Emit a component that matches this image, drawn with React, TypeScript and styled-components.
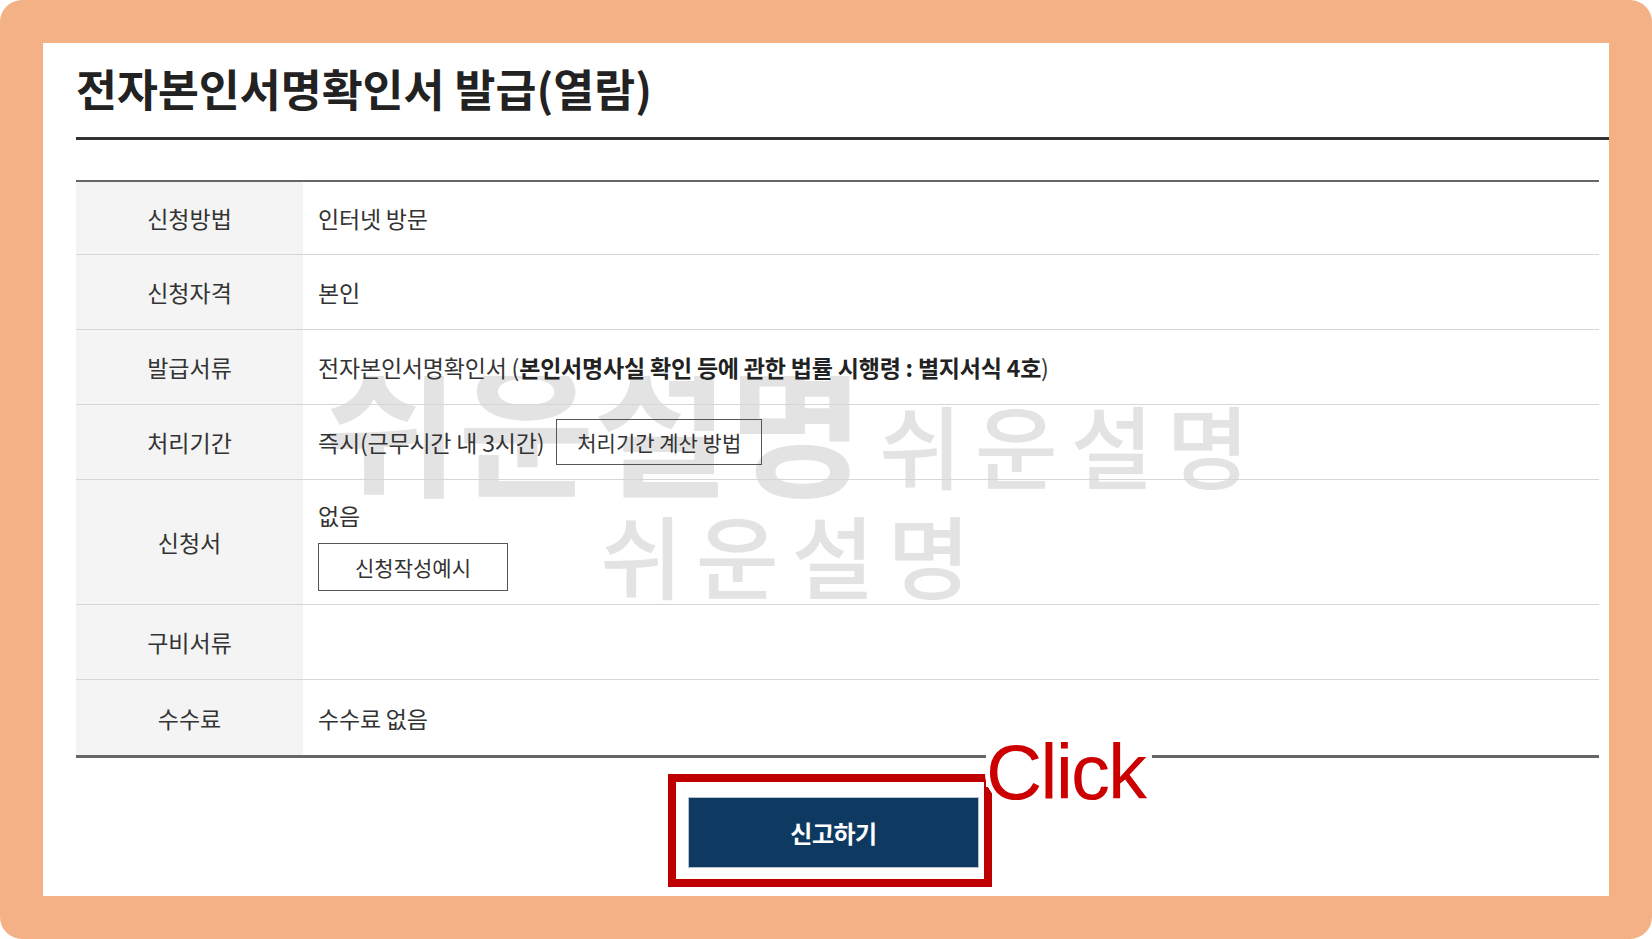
import styled, { createGlobalStyle } from 'styled-components';

const GlobalStyle = createGlobalStyle`
  html, body {
    margin: 0;
    padding: 0;
    background: #fff;
  }

  body {
    font-family: 'Noto Sans CJK KR', 'Noto Sans', sans-serif;
    color: #333;
  }

  * {
    box-sizing: border-box;
  }
`;

const Frame = styled.div`
  width: 1652px;
  height: 939px;
  padding: 43px;
  background: #f3b185;
  border-radius: 22px;
`;

const Panel = styled.div`
  height: 100%;
  padding-left: 33px;
  display: flex;
  flex-direction: column;
  background: #fff;
`;

const Title = styled.h1`
  margin: 19px 0 0;
  padding-bottom: 23px;
  border-bottom: 3px solid #333;
  font-size: 44.5px;
  line-height: 52px;
  font-weight: 700;
  letter-spacing: 0;
  color: #222;
`;

const TableWrap = styled.div`
  position: relative;
  margin: 40px 10px 0 0;
`;

const Table = styled.div`
  position: relative;
  z-index: 1;
  border-top: 2px solid #666;
  border-bottom: 3px solid #666;
`;

const Row = styled.div`
  display: grid;
  grid-template-columns: 227px 1fr;
  min-height: 75px;

  & + & {
    border-top: 1px solid #d6d6d6;
  }

  &:first-child {
    min-height: 72px;
  }

  &:last-child {
    min-height: 76px;
  }
`;

const Label = styled.div`
  display: flex;
  align-items: center;
  justify-content: center;
  background: #f4f4f4;
  font-size: 23px;
  color: #333;
`;

const Value = styled.div<{ $stack?: boolean }>`
  display: flex;
  flex-direction: ${(p) => (p.$stack ? 'column' : 'row')};
  align-items: ${(p) => (p.$stack ? 'flex-start' : 'center')};
  gap: ${(p) => (p.$stack ? '13px' : '12px')};
  padding: ${(p) => (p.$stack ? '20px 15px 13px' : '0 15px')};
  font-size: 23px;
  line-height: 30px;
  letter-spacing: -0.2px;
  color: #333;

  b {
    font-weight: 700;
    color: #222;
  }
`;

const OutlineButton = styled.button<{ $w: number; $h: number }>`
  width: ${(p) => p.$w}px;
  height: ${(p) => p.$h}px;
  padding: 0;
  border: 1px solid #555;
  background: transparent;
  font-family: inherit;
  font-size: 21px;
  color: #333;
`;

const Watermark = styled.div<{ $size: number; $top: number; $left: number; $spacing: number; $weight: number }>`
  position: absolute;
  top: ${(p) => p.$top}px;
  left: ${(p) => p.$left}px;
  z-index: 0;
  font-size: ${(p) => p.$size}px;
  line-height: 1;
  font-weight: ${(p) => p.$weight};
  letter-spacing: ${(p) => p.$spacing}px;
  white-space: nowrap;
  color: #e3e3e3;
  pointer-events: none;
`;

const WatermarkClip = styled.div`
  position: absolute;
  top: 196px;
  left: 247px;
  height: 150px;
  width: 600px;
  overflow: hidden;
  z-index: 0;
  pointer-events: none;

  ${Watermark} {
    position: static;
    margin-top: -29px;
  }
`;

const ButtonRow = styled.div`
  display: flex;
  justify-content: center;
  padding-top: 39px;
  margin-right: 18px;
`;

const ButtonWrap = styled.div`
  position: relative;
`;

const SubmitButton = styled.button`
  width: 291px;
  height: 71px;
  border: 1px solid #b7c2cc;
  background: #0e3a62;
  font-family: inherit;
  font-size: 24px;
  font-weight: 700;
  color: #fff;
  letter-spacing: -0.5px;
`;

const Highlight = styled.div`
  position: absolute;
  top: -23px;
  left: -20px;
  right: -13px;
  bottom: -19px;
  border: 8px solid #c00000;
  pointer-events: none;
`;

const ClickLabel = styled.span`
  position: absolute;
  top: -64px;
  left: calc(100% + 7px);
  z-index: 2;
  display: block;
  height: 54px;
  padding-right: 7px;
  background: #fff;
  font-family: 'Liberation Sans', Arial, sans-serif;
  font-size: 78px;
  line-height: 78px;
  letter-spacing: -2px;
  color: #cc0000;
  white-space: nowrap;
  text-shadow: 5px 0 #fff, -5px 0 #fff, 0 5px #fff, 0 -5px #fff, 3px 3px #fff, -3px 3px #fff,
    3px -3px #fff, -3px -3px #fff;
`;

export default function App() {
  return (
    <>
      <GlobalStyle />
      <Frame>
        <Panel>
          <Title>전자본인서명확인서 발급(열람)</Title>
          <TableWrap>
            <WatermarkClip>
              <Watermark $size={148} $top={0} $left={0} $spacing={-1} $weight={700}>
                쉬운설명
              </Watermark>
            </WatermarkClip>
            <Watermark $size={90} $top={218} $left={803} $spacing={13} $weight={500}>
              쉬운설명
            </Watermark>
            <Watermark $size={90} $top={328} $left={524} $spacing={13} $weight={500}>
              쉬운설명
            </Watermark>
            <Table>
              <Row>
                <Label>신청방법</Label>
                <Value>인터넷 방문</Value>
              </Row>
              <Row>
                <Label>신청자격</Label>
                <Value>본인</Value>
              </Row>
              <Row>
                <Label>발급서류</Label>
                <Value>
                  <span>
                    전자본인서명확인서 (<b>본인서명사실 확인 등에 관한 법률 시행령 : 별지서식 4호</b>)
                  </span>
                </Value>
              </Row>
              <Row>
                <Label>처리기간</Label>
                <Value>
                  <span>즉시(근무시간 내 3시간)</span>
                  <OutlineButton $w={206} $h={46}>
                    처리기간 계산 방법
                  </OutlineButton>
                </Value>
              </Row>
              <Row>
                <Label>신청서</Label>
                <Value $stack>
                  <span>없음</span>
                  <OutlineButton $w={190} $h={48}>
                    신청작성예시
                  </OutlineButton>
                </Value>
              </Row>
              <Row>
                <Label>구비서류</Label>
                <Value />
              </Row>
              <Row>
                <Label>수수료</Label>
                <Value>수수료 없음</Value>
              </Row>
            </Table>
          </TableWrap>
          <ButtonRow>
            <ButtonWrap>
              <SubmitButton>신고하기</SubmitButton>
              <Highlight />
              <ClickLabel>Click</ClickLabel>
            </ButtonWrap>
          </ButtonRow>
        </Panel>
      </Frame>
    </>
  );
}
